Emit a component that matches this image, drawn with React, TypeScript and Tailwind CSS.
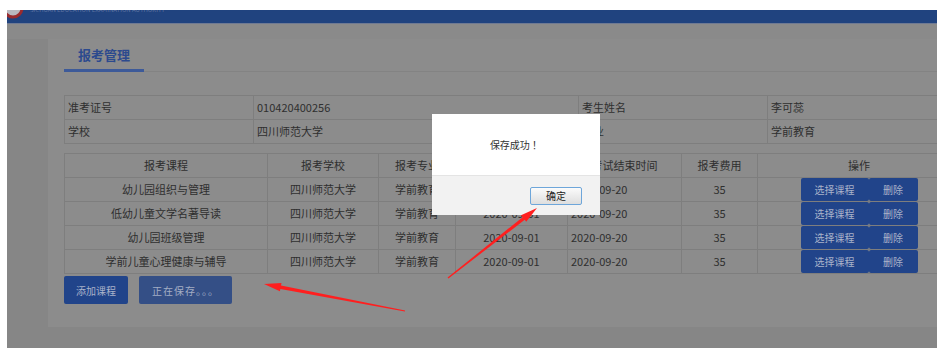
const courses = [
  { name: '幼儿园组织与管理', school: '四川师范大学', major: '学前教育', start: '2020-09-01', end: '2020-09-20', fee: '35' },
  { name: '低幼儿童文学名著导读', school: '四川师范大学', major: '学前教育', start: '2020-09-01', end: '2020-09-20', fee: '35' },
  { name: '幼儿园班级管理', school: '四川师范大学', major: '学前教育', start: '2020-09-01', end: '2020-09-20', fee: '35' },
  { name: '学前儿童心理健康与辅导', school: '四川师范大学', major: '学前教育', start: '2020-09-01', end: '2020-09-20', fee: '35' },
]

// tapered red annotation arrow, tail -> tip
function arrowPoints(x1: number, y1: number, x2: number, y2: number) {
  const len = Math.hypot(x2 - x1, y2 - y1)
  const dx = (x2 - x1) / len
  const dy = (y2 - y1) / len
  const nx = -dy
  const ny = dx
  const head = 17
  const neckX = x2 - dx * head
  const neckY = y2 - dy * head
  const pts = [
    [x1 + nx * 0.6, y1 + ny * 0.6],
    [neckX + nx * 1.7, neckY + ny * 1.7],
    [neckX + nx * 4.2, neckY + ny * 4.2],
    [x2, y2],
    [neckX - nx * 4.2, neckY - ny * 4.2],
    [neckX - nx * 1.7, neckY - ny * 1.7],
    [x1 - nx * 0.6, y1 - ny * 0.6],
  ]
  return pts.map((p) => `${p[0].toFixed(1)},${p[1].toFixed(1)}`).join(' ')
}

function Header() {
  return (
    <div className="h-[14px] overflow-hidden bg-[#20437f] border-b border-[#6f7a93]">
      <div className="-mt-[6px] flex items-start">
        <svg width="18" height="20" viewBox="0 0 18 20" className="shrink-0">
          <circle cx="6" cy="4" r="9" fill="#b9b9c0" stroke="#9a2b2e" strokeWidth="3" />
        </svg>
        <span className="ml-[5px] mt-[2px] text-[6px] leading-[7px] text-[#5f73a2] whitespace-nowrap">
          SICHUAN EDUCATION EXAMINATION AUTHORITY
        </span>
      </div>
    </div>
  )
}

function InfoTable() {
  const cell = 'border border-[#7e7e7e] h-[24px] px-[3px] text-left font-normal'
  return (
    <table className="table-fixed border-collapse w-[1028px] text-[11px] text-[#2f2f2f]">
      <colgroup>
        <col className="w-[189px]" />
        <col className="w-[325px]" />
        <col className="w-[189px]" />
        <col className="w-[325px]" />
      </colgroup>
      <tbody>
        <tr>
          <td className={cell}>准考证号</td>
          <td className={cell}>010420400256</td>
          <td className={cell}>考生姓名</td>
          <td className={cell}>李可蕊</td>
        </tr>
        <tr>
          <td className={cell}>学校</td>
          <td className={cell}>四川师范大学</td>
          <td className={cell}>专业</td>
          <td className={cell}>学前教育</td>
        </tr>
      </tbody>
    </table>
  )
}

function CourseTable() {
  const th = 'border border-[#7e7e7e] h-[24px] text-center font-normal'
  const td = 'border border-[#7e7e7e] h-[24px] text-center'
  return (
    <table className="table-fixed border-collapse w-[896px] text-[11px] text-[#2f2f2f]">
      <colgroup>
        <col className="w-[203px]" />
        <col className="w-[111px]" />
        <col className="w-[77px]" />
        <col className="w-[112px]" />
        <col className="w-[114px]" />
        <col className="w-[76px]" />
        <col className="w-[203px]" />
      </colgroup>
      <thead>
        <tr>
          <th className={th}>报考课程</th>
          <th className={th}>报考学校</th>
          <th className={th}>报考专业</th>
          <th className={th}>考试开始时间</th>
          <th className={th}>考试结束时间</th>
          <th className={th}>报考费用</th>
          <th className={th}>操作</th>
        </tr>
      </thead>
      <tbody>
        {courses.map((c) => (
          <tr key={c.name}>
            <td className={td}>{c.name}</td>
            <td className={td}>{c.school}</td>
            <td className={td}>{c.major}</td>
            <td className={td}>{c.start}</td>
            <td className="border border-[#7e7e7e] h-[24px] px-[3px] text-left">{c.end}</td>
            <td className={td}>{c.fee}</td>
            <td className={td}>
              <div className="flex justify-center">
                <button className="w-[68px] h-[23px] rounded-[2px] bg-[#21448a] text-[10px] text-[#a9b2c9]">
                  选择课程
                </button>
                <button className="w-[49px] h-[23px] rounded-[2px] bg-[#21448a] text-[10px] text-[#a9b2c9]">
                  删除
                </button>
              </div>
            </td>
          </tr>
        ))}
      </tbody>
    </table>
  )
}

function SuccessDialog() {
  return (
    <div className="absolute left-[432px] top-[114px] w-[168px] flex flex-col">
      <div className="h-[61px] bg-white flex items-center justify-center text-[10px] text-[#333]">
        保存成功 ！
      </div>
      <div className="h-[40px] bg-[#f2f2f2] border-t border-[#e4e4e4] flex items-center justify-end pr-[18px]">
        <button className="w-[52px] h-[18px] rounded-[2px] border border-[#6ea6da] bg-gradient-to-b from-[#fbfbfb] to-[#dedede] text-[10px] leading-none text-[#222]">
          确定
        </button>
      </div>
    </div>
  )
}

export default function App() {
  return (
    <div className="relative w-[945px] h-[360px] bg-white overflow-hidden font-['Noto_Sans_CJK_SC',sans-serif]">
      <div className="absolute left-[7px] top-[10px] w-[930px] h-[338px] overflow-hidden bg-[#868686] flex flex-col">
        <Header />
        <div className="h-[15px] bg-[#8a8a8a] shrink-0" />
        <div className="ml-[41px] h-[288px] bg-[#8c8c8c] px-[16px] shrink-0">
          <div className="flex border-b border-[#838383] w-[1028px]">
            <div className="w-[80px] -mb-px pt-[7px] pb-[5px] border-b-[3px] border-[#3d5a99] text-center text-[13px] leading-[18px] font-bold text-[#2c4a8e]">
              报考管理
            </div>
          </div>
          <div className="mt-[23px]">
            <InfoTable />
          </div>
          <div className="mt-[9px]">
            <CourseTable />
          </div>
          <div className="mt-[2px] flex gap-[11px]">
            <button className="w-[64px] h-[28px] rounded-[2px] bg-[#21448a] text-[10px] text-[#a9b2c9]">
              添加课程
            </button>
            <button className="w-[93px] h-[28px] rounded-[2px] bg-[#344f86] text-[10px] text-[#a3adc4] tracking-[1px]">
              正在保存。。。
            </button>
          </div>
        </div>
      </div>

      <SuccessDialog />

      <svg className="absolute left-0 top-0 pointer-events-none" width="945" height="360">
        <polygon points={arrowPoints(448, 278, 537, 208)} fill="#ff1f1f" />
        <polygon points={arrowPoints(405, 311, 264, 284)} fill="#ff1f1f" />
      </svg>
    </div>
  )
}
